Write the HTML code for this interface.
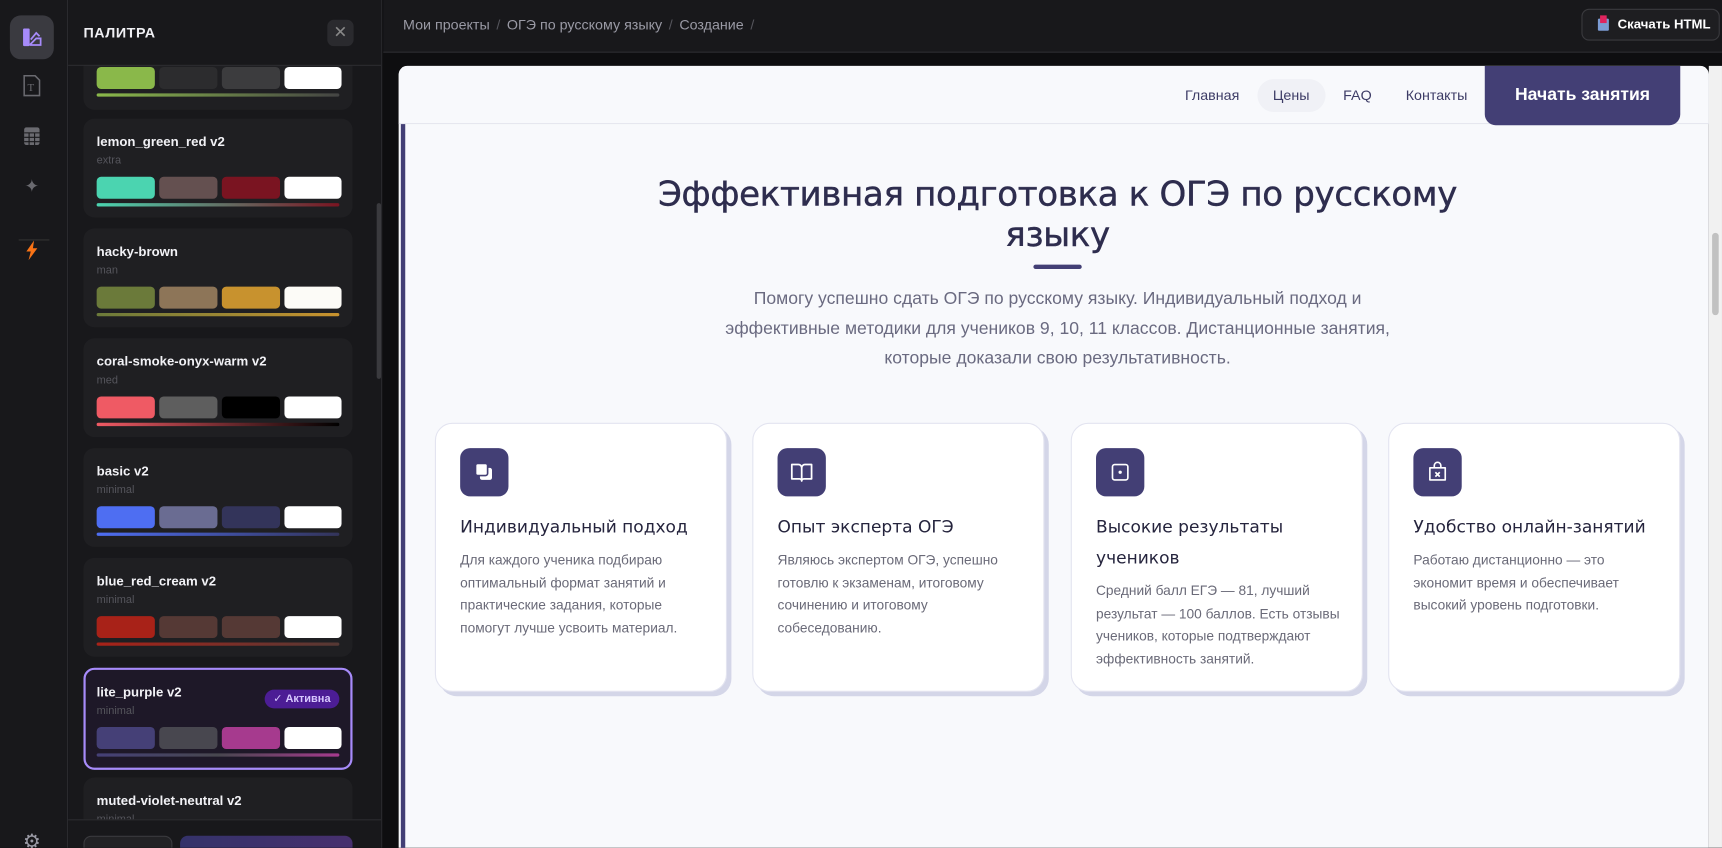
<!DOCTYPE html>
<html><head><meta charset="utf-8"><style>
*{box-sizing:border-box;margin:0;padding:0}
html,body{width:1722px;height:848px;overflow:hidden}
body{background:#0e0e10;font-family:"Liberation Sans","DejaVu Sans",sans-serif;position:relative}
#w{position:absolute;left:0;top:0;width:1568px;height:772px;transform:scale(1.09821);transform-origin:0 0;overflow:hidden}
.rail{position:absolute;left:0;top:0;width:62px;height:772px;background:#18181b;border-right:1px solid #2a2a2e}
.ri{position:absolute;left:9px;width:40px;height:40px;border-radius:10px;display:flex;align-items:center;justify-content:center}
.panel{position:absolute;left:62px;top:0;width:286px;height:772px;background:#18181b;border-right:1px solid #2a2a2e;overflow:hidden}
.ph{position:absolute;left:0;top:0;width:286px;z-index:3;background:#18181b;height:60px;border-bottom:1px solid #2c2c30;display:flex;align-items:center;padding-left:14px;color:#f0f0f4;font-weight:bold;font-size:13px;letter-spacing:.5px}
.x{position:absolute;left:236px;top:18px;width:24px;height:24px;border-radius:6px;background:#2a2a2e;color:#888;font-size:15px;text-align:center;line-height:23px;z-index:4}
.card{position:absolute;left:14px;width:245px;height:90px;background:#1f1f22;border-radius:10px}
.card .n{position:absolute;left:12px;top:14px;color:#f2f2f6;font-weight:bold;font-size:12px}
.card .s{position:absolute;left:12px;top:33px;color:#55555c;font-size:10px}
.sw{position:absolute;left:12px;top:53px;display:flex;gap:4px}
.sw i{display:block;width:53px;height:20px;border-radius:4px}
.sw i:last-child{width:52px}
.bar{position:absolute;left:12px;top:77px;width:221px;height:3px;border-radius:2px}
.pf{position:absolute;left:0;top:746px;width:286px;height:26px;background:#18181b;border-top:1px solid #2c2c30;z-index:3;overflow:hidden}
.top{position:absolute;left:349px;top:0;width:1219px;height:48px;background:#18181b;border-bottom:1px solid #2c2c30}
.bc{position:absolute;left:18px;top:15px;color:#9a9aa5;font-size:13px}
.bc span{color:#55555c;margin:0 6px}
.dl{position:absolute;left:1091px;top:8px;width:126px;height:29px;border:1px solid #3a3a3e;border-radius:7px;background:#1e1e21;color:#fff;font-size:12px;font-weight:bold;line-height:27px;padding-left:32px}
.frame{position:absolute;left:363px;top:60px;width:1193px;height:712px;background:#f8f9fc;border-radius:8px 8px 0 0;overflow:hidden}
.nav{position:absolute;left:0;top:0;width:1205px;height:53px;border-bottom:1px solid #e6e7ef;background:#f8f9fc}
.nv{position:absolute;top:19px;font-size:13px;color:#3d3c66}
.cta{position:absolute;left:989px;top:0;width:178px;height:54px;background:#433f75;border-radius:0 0 10px 10px;color:#fff;font-weight:bold;font-size:16px;text-align:center;line-height:54px}
.lb{position:absolute;left:2px;top:53px;width:4px;height:700px;background:#433f75}
h1{position:absolute;left:200px;width:800px;top:99px;text-align:center;font-size:31px;line-height:37px;color:#2e2d4e;font-weight:normal;font-family:"DejaVu Sans",sans-serif;letter-spacing:-.3px;-webkit-text-stroke:.4px #2e2d4e}
.ul{position:absolute;left:578px;top:181px;width:44px;height:4px;background:#433f75;border-radius:2px}
.lead{position:absolute;left:290px;width:620px;top:199px;text-align:center;font-size:16px;line-height:27px;color:#6a6a80}
.fc{position:absolute;top:325px;width:266px;height:245px;background:#fff;border:1px solid #e3e4f0;border-radius:16px;box-shadow:4px 4px 0 #d4d6e8}
.ic{position:absolute;left:22px;top:22px;width:44px;height:44px;background:#433f75;border-radius:9px;display:flex;align-items:center;justify-content:center}
.fc h3{position:absolute;left:22px;top:80px;width:230px;font-size:15.5px;line-height:28px;font-weight:normal;color:#25243d;font-family:"DejaVu Sans",sans-serif}
.fc p{position:absolute;left:22px;width:230px;font-size:12.5px;line-height:20.5px;color:#6a6a78}
</style></head><body><div id="w">
<div class="rail">
 <div class="ri" style="top:14px;background:#3a3a40"><svg width="20" height="20" viewBox="0 0 20 20"><rect x="2" y="2" width="6" height="16" rx="1" fill="#a78bfa"/><path d="M8 17h10v-6h-4l-6 6M9 12l5-6 3 3" fill="none" stroke="#a78bfa" stroke-width="1.6"/></svg></div>
 <div class="ri" style="top:58px"><svg width="16" height="20" viewBox="0 0 16 20"><path d="M1 1h10l4 4v14H1z" fill="none" stroke="#6a6a70" stroke-width="1.4"/><text x="4" y="15" font-size="10" fill="#6a6a70" font-family="Liberation Serif">T</text></svg></div>
 <div class="ri" style="top:104px"><svg width="16" height="18" viewBox="0 0 16 18"><rect x="1" y="1" width="14" height="16" rx="2" fill="#6a6a70"/><path d="M1 6h14M1 10h14M1 14h14M5.5 6v11M10.5 6v11" stroke="#18181b" stroke-width="1"/></svg></div>
 <div class="ri" style="top:150px;color:#6a6a70;font-size:16px">✦</div>
 <div style="position:absolute;left:17px;top:218px;width:28px;height:1px;background:#333"></div>
 <div class="ri" style="top:208px"><svg width="12" height="18" viewBox="0 0 12 18"><path d="M8 0L1 10h4l-2 8 8-11H7z" fill="#f97316"/></svg></div>
 <div class="ri" style="top:746px;color:#9a9aa5;font-size:18px">⚙</div>
</div>
<div class="panel">
 <div class="ph">ПАЛИТРА</div><div class="x">✕</div>
 <div style="position:absolute;left:281px;top:185px;width:4px;height:160px;background:#3a3a3e;border-radius:2px"></div>
 <div class="card" style="top:0px;height:100px"><div class="sw" style="top:61px"><i style="background:#8ab84a"></i><i style="background:#2c2c2e"></i><i style="background:#3c3c3e"></i><i style="background:#fff"></i></div><div class="bar" style="top:85px;background:linear-gradient(90deg,#8ab84a,#444)"></div></div>
 <div class="card" style="top:108px"><div class="n">lemon_green_red v2</div><div class="s">extra</div><div class="sw"><i style="background:#4bd4b0"></i><i style="background:#645050"></i><i style="background:#7a1421"></i><i style="background:#fff"></i></div><div class="bar" style="background:linear-gradient(90deg,#4bd4b0,#7a1421)"></div></div>
 <div class="card" style="top:208px"><div class="n">hacky-brown</div><div class="s">man</div><div class="sw"><i style="background:#6b7a3a"></i><i style="background:#8d7558"></i><i style="background:#c8922e"></i><i style="background:#fcfbf7"></i></div><div class="bar" style="background:linear-gradient(90deg,#6b7a3a,#c8922e)"></div></div>
 <div class="card" style="top:308px"><div class="n">coral-smoke-onyx-warm v2</div><div class="s">med</div><div class="sw"><i style="background:#ef5a64"></i><i style="background:#5e5e5e"></i><i style="background:#000"></i><i style="background:#fff"></i></div><div class="bar" style="background:linear-gradient(90deg,#ef5a64,#000)"></div></div>
 <div class="card" style="top:408px"><div class="n">basic v2</div><div class="s">minimal</div><div class="sw"><i style="background:#4e6ef2"></i><i style="background:#6a6c92"></i><i style="background:#33345a"></i><i style="background:#fff"></i></div><div class="bar" style="background:linear-gradient(90deg,#4e6ef2,#33345a)"></div></div>
 <div class="card" style="top:508px"><div class="n">blue_red_cream v2</div><div class="s">minimal</div><div class="sw"><i style="background:#a82218"></i><i style="background:#553935"></i><i style="background:#553935"></i><i style="background:#fff"></i></div><div class="bar" style="background:linear-gradient(90deg,#a82218,#553935)"></div></div>
 <div class="card" style="top:608px;height:93px;background:#1e1828;border:2px solid #a78bfa"><div class="n" style="left:10px;top:13px">lite_purple v2</div><div style="position:absolute;right:10px;top:18px;background:#4c1d95;color:#d8c8ff;font-size:10px;font-weight:bold;padding:3px 8px;border-radius:10px">✓ Активна</div><div class="s" style="left:10px;top:32px">minimal</div><div class="sw" style="left:10px;top:52px"><i style="background:#454077"></i><i style="background:#48474f"></i><i style="background:#a63a8e"></i><i style="background:#fff"></i></div><div class="bar" style="left:10px;top:76px;background:linear-gradient(90deg,#454077,#48474f,#a63a8e)"></div></div>
 <div class="card" style="top:708px"><div class="n">muted-violet-neutral v2</div><div class="s">minimal</div></div>
 <div class="pf"><div style="position:absolute;left:14px;top:14px;width:81px;height:40px;border:1px solid #3a3a3e;border-radius:7px;background:#222225"></div><div style="position:absolute;left:102px;top:14px;width:157px;height:40px;border-radius:7px;background:linear-gradient(90deg,#34326a,#47306e)"></div></div>
</div>
<div class="top"><div class="bc">Мои проекты<span>/</span>ОГЭ по русскому языку<span>/</span>Создание<span>/</span></div>
 <div class="dl"><span style="position:absolute;left:14px;top:8px;width:10px;height:11px;background:#7c9cd4;border-radius:1px"></span><span style="position:absolute;left:16px;top:5px;width:6px;height:7px;background:#e0245e"></span>Скачать HTML</div></div>
<div style="position:absolute;left:1556px;top:60px;width:12px;height:712px;background:#f1f1f1"></div>
<div style="position:absolute;left:1559px;top:212px;width:6px;height:75px;background:#c1c1c1;border-radius:3px"></div>
<div class="frame">
 <div class="nav">
  <div class="nv" style="left:716px">Главная</div>
  <div style="position:absolute;left:782px;top:12px;width:62px;height:30px;border-radius:15px;background:#f0f1f6"></div>
  <div class="nv" style="left:796px">Цены</div>
  <div class="nv" style="left:860px">FAQ</div>
  <div class="nv" style="left:917px">Контакты</div>
  <div class="cta">Начать занятия</div>
 </div>
 <div class="lb"></div>
 <h1>Эффективная подготовка к ОГЭ по русскому языку</h1>
 <div class="ul"></div>
 <div class="lead">Помогу успешно сдать ОГЭ по русскому языку. Индивидуальный подход и эффективные методики для учеников 9, 10, 11 классов. Дистанционные занятия, которые доказали свою результативность.</div>
 <div class="fc" style="left:33px"><div class="ic"><svg width="20" height="20" viewBox="0 0 20 20"><rect x="6" y="6" width="11" height="11" rx="2" fill="#fff"/><rect x="2" y="2" width="11" height="11" rx="2" fill="#fff" stroke="#433f75" stroke-width="1.5"/></svg></div><h3>Индивидуальный подход</h3><p style="top:114px">Для каждого ученика подбираю оптимальный формат занятий и практические задания, которые помогут лучше усвоить материал.</p></div>
 <div class="fc" style="left:322px"><div class="ic"><svg width="22" height="20" viewBox="0 0 22 20"><path d="M2 3h6a3 3 0 013 3v12a2 2 0 00-2-2H2zM20 3h-6a3 3 0 00-3 3v12a2 2 0 012-2h7z" fill="none" stroke="#fff" stroke-width="1.6" stroke-linejoin="round"/></svg></div><h3>Опыт эксперта ОГЭ</h3><p style="top:114px">Являюсь экспертом ОГЭ, успешно готовлю к экзаменам, итоговому сочинению и итоговому собеседованию.</p></div>
 <div class="fc" style="left:612px"><div class="ic"><svg width="20" height="20" viewBox="0 0 20 20"><rect x="3" y="3" width="14" height="14" rx="2" fill="none" stroke="#fff" stroke-width="1.5"/><circle cx="10" cy="10" r="1.5" fill="#fff"/></svg></div><h3>Высокие результаты учеников</h3><p style="top:142px">Средний балл ЕГЭ — 81, лучший результат — 100 баллов. Есть отзывы учеников, которые подтверждают эффективность занятий.</p></div>
 <div class="fc" style="left:901px"><div class="ic"><svg width="20" height="20" viewBox="0 0 20 20"><path d="M3 6h14v11H3zM7 6V4a3 3 0 016 0v2M8 10l4 4M12 10l-4 4" fill="none" stroke="#fff" stroke-width="1.5" stroke-linejoin="round"/></svg></div><h3>Удобство онлайн-занятий</h3><p style="top:114px">Работаю дистанционно — это экономит время и обеспечивает высокий уровень подготовки.</p></div>
</div>
</div></body></html>
